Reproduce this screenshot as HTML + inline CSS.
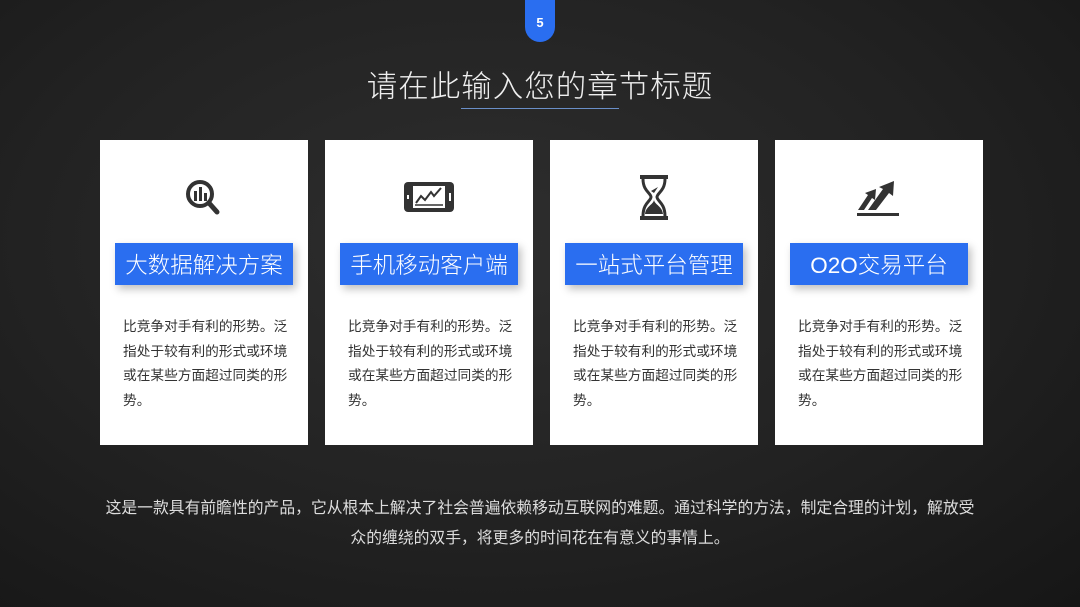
<!DOCTYPE html>
<html><head><meta charset="utf-8"><style>
body{margin:0;width:1080px;height:607px;overflow:hidden;background:radial-gradient(ellipse at 45% 40%,#2e2e2e 0%,#222 55%,#161616 100%);font-family:"Liberation Sans","Noto Sans CJK SC",sans-serif;position:relative}
.badge{position:absolute;left:525px;top:0;width:30px;height:42px;background:#2a6ef0;border-radius:0 0 15px 15px;color:#fff;font-size:13px;font-weight:bold;text-align:center;line-height:46px}
.title{position:absolute;left:0;width:1080px;top:62px;text-align:center;color:#eee;font-size:30.5px;font-weight:300;letter-spacing:1px}
.line{position:absolute;left:461px;top:108px;width:158px;height:1px;background:#6a8fc8}
.card{position:absolute;top:140px;width:208px;height:305px;background:#fff}
.icon{position:absolute;left:79px;top:35px;width:50px;height:45px}
.lab{position:absolute;left:15px;top:103px;width:178px;height:42px;background:#2a6ef0;color:#fff;font-size:22.5px;line-height:45px;text-align:center;box-shadow:3px 4px 8px rgba(0,0,0,.25);font-weight:300}
.txt{position:absolute;left:23px;top:175px;width:168px;color:#333;font-size:13.7px;line-height:24.5px}
.bot{position:absolute;left:0;width:1080px;top:494px;text-align:center;color:#ddd;font-size:15.8px;line-height:30px}
</style></head><body>
<div class="badge">5</div>
<div class="title">请在此输入您的章节标题</div>
<div class="line"></div>

<div class="card" style="left:100px">
<svg class="icon" viewBox="0 0 50 45"><circle cx="21" cy="19" r="12" fill="none" stroke="#333" stroke-width="4"/><rect x="15" y="16" width="3" height="10" fill="#333"/><rect x="20" y="12" width="3" height="14" fill="#333"/><rect x="25" y="18" width="3" height="8" fill="#333"/><line x1="30" y1="28" x2="38" y2="37" stroke="#333" stroke-width="5" stroke-linecap="round"/></svg>
<div class="lab">大数据解决方案</div>
<div class="txt">比竞争对手有利的形势。泛指处于较有利的形式或环境或在某些方面超过同类的形势。</div></div>

<div class="card" style="left:325px">
<svg class="icon" viewBox="0 0 50 45"><rect x="0" y="7" width="50" height="30" rx="4" fill="#333"/><rect x="9" y="11" width="32" height="22" fill="#fff"/><rect x="3" y="20" width="2" height="4" fill="#fff"/><rect x="45" y="18" width="2" height="8" fill="#fff"/><polyline points="12,28 17,21 21,25 27,17 30,21 37,13" fill="none" stroke="#333" stroke-width="2"/><line x1="11" y1="30" x2="39" y2="30" stroke="#333" stroke-width="1.5"/></svg>
<div class="lab">手机移动客户端</div>
<div class="txt">比竞争对手有利的形势。泛指处于较有利的形式或环境或在某些方面超过同类的形势。</div></div>

<div class="card" style="left:550px">
<svg class="icon" viewBox="0 0 50 45"><rect x="11" y="0" width="28" height="4" fill="#333"/><rect x="11" y="41" width="28" height="4" fill="#333"/><path d="M14 4 C14 16 22 18 22 22 C22 26 14 28 14 41 M36 4 C36 16 28 18 28 22 C28 26 36 28 36 41" fill="none" stroke="#333" stroke-width="3"/><path d="M16 39 C17 31 24 30 25 25 C26 30 33 31 34 39Z" fill="#333"/><path d="M22 16 L29 12 L25 18Z" fill="#333"/></svg>
<div class="lab">一站式平台管理</div>
<div class="txt">比竞争对手有利的形势。泛指处于较有利的形式或环境或在某些方面超过同类的形势。</div></div>

<div class="card" style="left:775px">
<svg class="icon" viewBox="0 0 50 45"><path d="M4 35 L14 20 L11 18 L22 14 L21 25 L18 23 L10 35Z" fill="#333"/><path d="M14 35 L29 14 L25 12 L40 6 L39 21 L35 18 L22 35Z" fill="#333"/><rect x="3" y="38" width="42" height="3" fill="#333"/></svg>
<div class="lab">O2O交易平台</div>
<div class="txt">比竞争对手有利的形势。泛指处于较有利的形式或环境或在某些方面超过同类的形势。</div></div>

<div class="bot">这是一款具有前瞻性的产品，它从根本上解决了社会普遍依赖移动互联网的难题。通过科学的方法，制定合理的计划，解放受<br>众的缠绕的双手，将更多的时间花在有意义的事情上。</div>
</body></html>
